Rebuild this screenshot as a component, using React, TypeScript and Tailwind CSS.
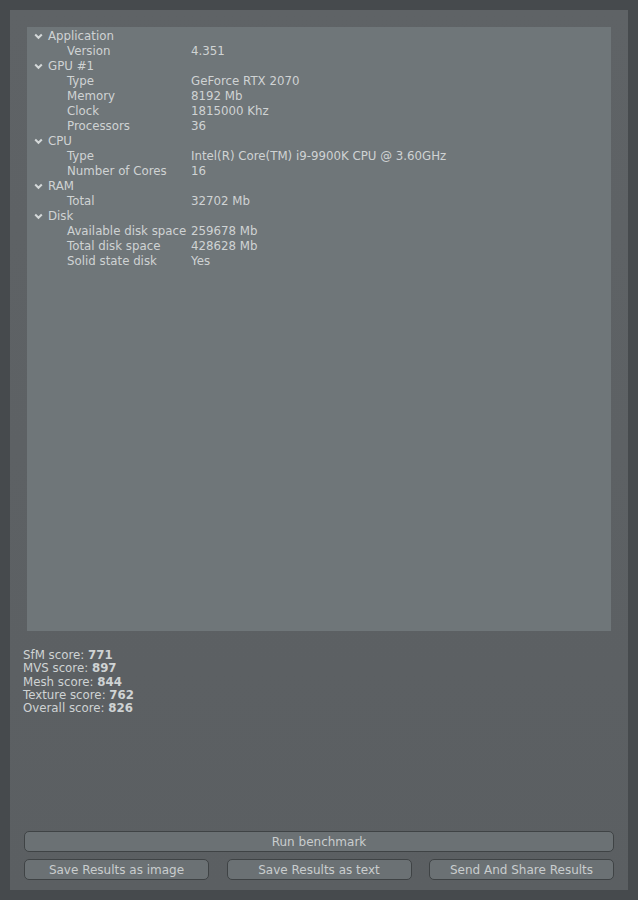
const tree: { group: string; rows: [string, string][] }[] = [
  { group: "Application", rows: [["Version", "4.351"]] },
  {
    group: "GPU #1",
    rows: [
      ["Type", "GeForce RTX 2070"],
      ["Memory", "8192 Mb"],
      ["Clock", "1815000 Khz"],
      ["Processors", "36"],
    ],
  },
  {
    group: "CPU",
    rows: [
      ["Type", "Intel(R) Core(TM) i9-9900K CPU @ 3.60GHz"],
      ["Number of Cores", "16"],
    ],
  },
  { group: "RAM", rows: [["Total", "32702 Mb"]] },
  {
    group: "Disk",
    rows: [
      ["Available disk space", "259678 Mb"],
      ["Total disk space", "428628 Mb"],
      ["Solid state disk", "Yes"],
    ],
  },
];

const scores: [string, string][] = [
  ["SfM score:", "771"],
  ["MVS score:", "897"],
  ["Mesh score:", "844"],
  ["Texture score:", "762"],
  ["Overall score:", "826"],
];

function Chevron() {
  return (
    <svg width="9" height="7" viewBox="0 0 9 7" className="shrink-0">
      <path d="M1.2 1.5 L4.5 4.8 L7.8 1.5" fill="none" stroke="#d4d8d9" strokeWidth="2" />
    </svg>
  );
}

function Button({ label, className }: { label: string; className?: string }) {
  return (
    <button
      className={
        "h-[21px] rounded-[5px] border border-[#3f4345] bg-[#6b7174] text-[12px] leading-none text-[#c9cdce] " +
        (className ?? "")
      }
    >
      {label}
    </button>
  );
}

export default function App() {
  return (
    <div className="min-h-[900px] w-[638px] bg-[#464a4d] p-[10px] font-['DejaVu_Sans',sans-serif]">
      <div className="flex h-[880px] w-[618px] flex-col bg-gradient-to-b from-[#5f6366] to-[#5b5f62] px-[14px] pb-[10px] pt-[17px]">
        <div className="mx-[3px] h-[604px] bg-[#6f7679] pt-[2px] text-[11.8px] leading-[15px] text-[#cfd3d4]">
          {tree.map((g) => (
            <div key={g.group}>
              <div className="flex items-center">
                <span className="flex w-[21px] justify-center pl-[2px]">
                  <Chevron />
                </span>
                <span>{g.group}</span>
              </div>
              {g.rows.map(([k, v]) => (
                <div key={k} className="flex">
                  <span className="w-[164px] pl-[40px]">{k}</span>
                  <span>{v}</span>
                </div>
              ))}
            </div>
          ))}
        </div>

        <div className="mt-[18px] -ml-[1px] text-[11.8px] leading-[13.3px] text-[#cfd3d4]">
          {scores.map(([k, v]) => (
            <div key={k}>
              {k} <span className="font-bold">{v}</span>
            </div>
          ))}
        </div>

        <div className="flex-1" />

        <div className="flex flex-col gap-[7px]">
          <Button label="Run benchmark" className="w-full" />
          <div className="flex justify-between">
            <Button label="Save Results as image" className="w-[185px]" />
            <Button label="Save Results as text" className="w-[185px]" />
            <Button label="Send And Share Results" className="w-[185px]" />
          </div>
        </div>
      </div>
    </div>
  );
}
